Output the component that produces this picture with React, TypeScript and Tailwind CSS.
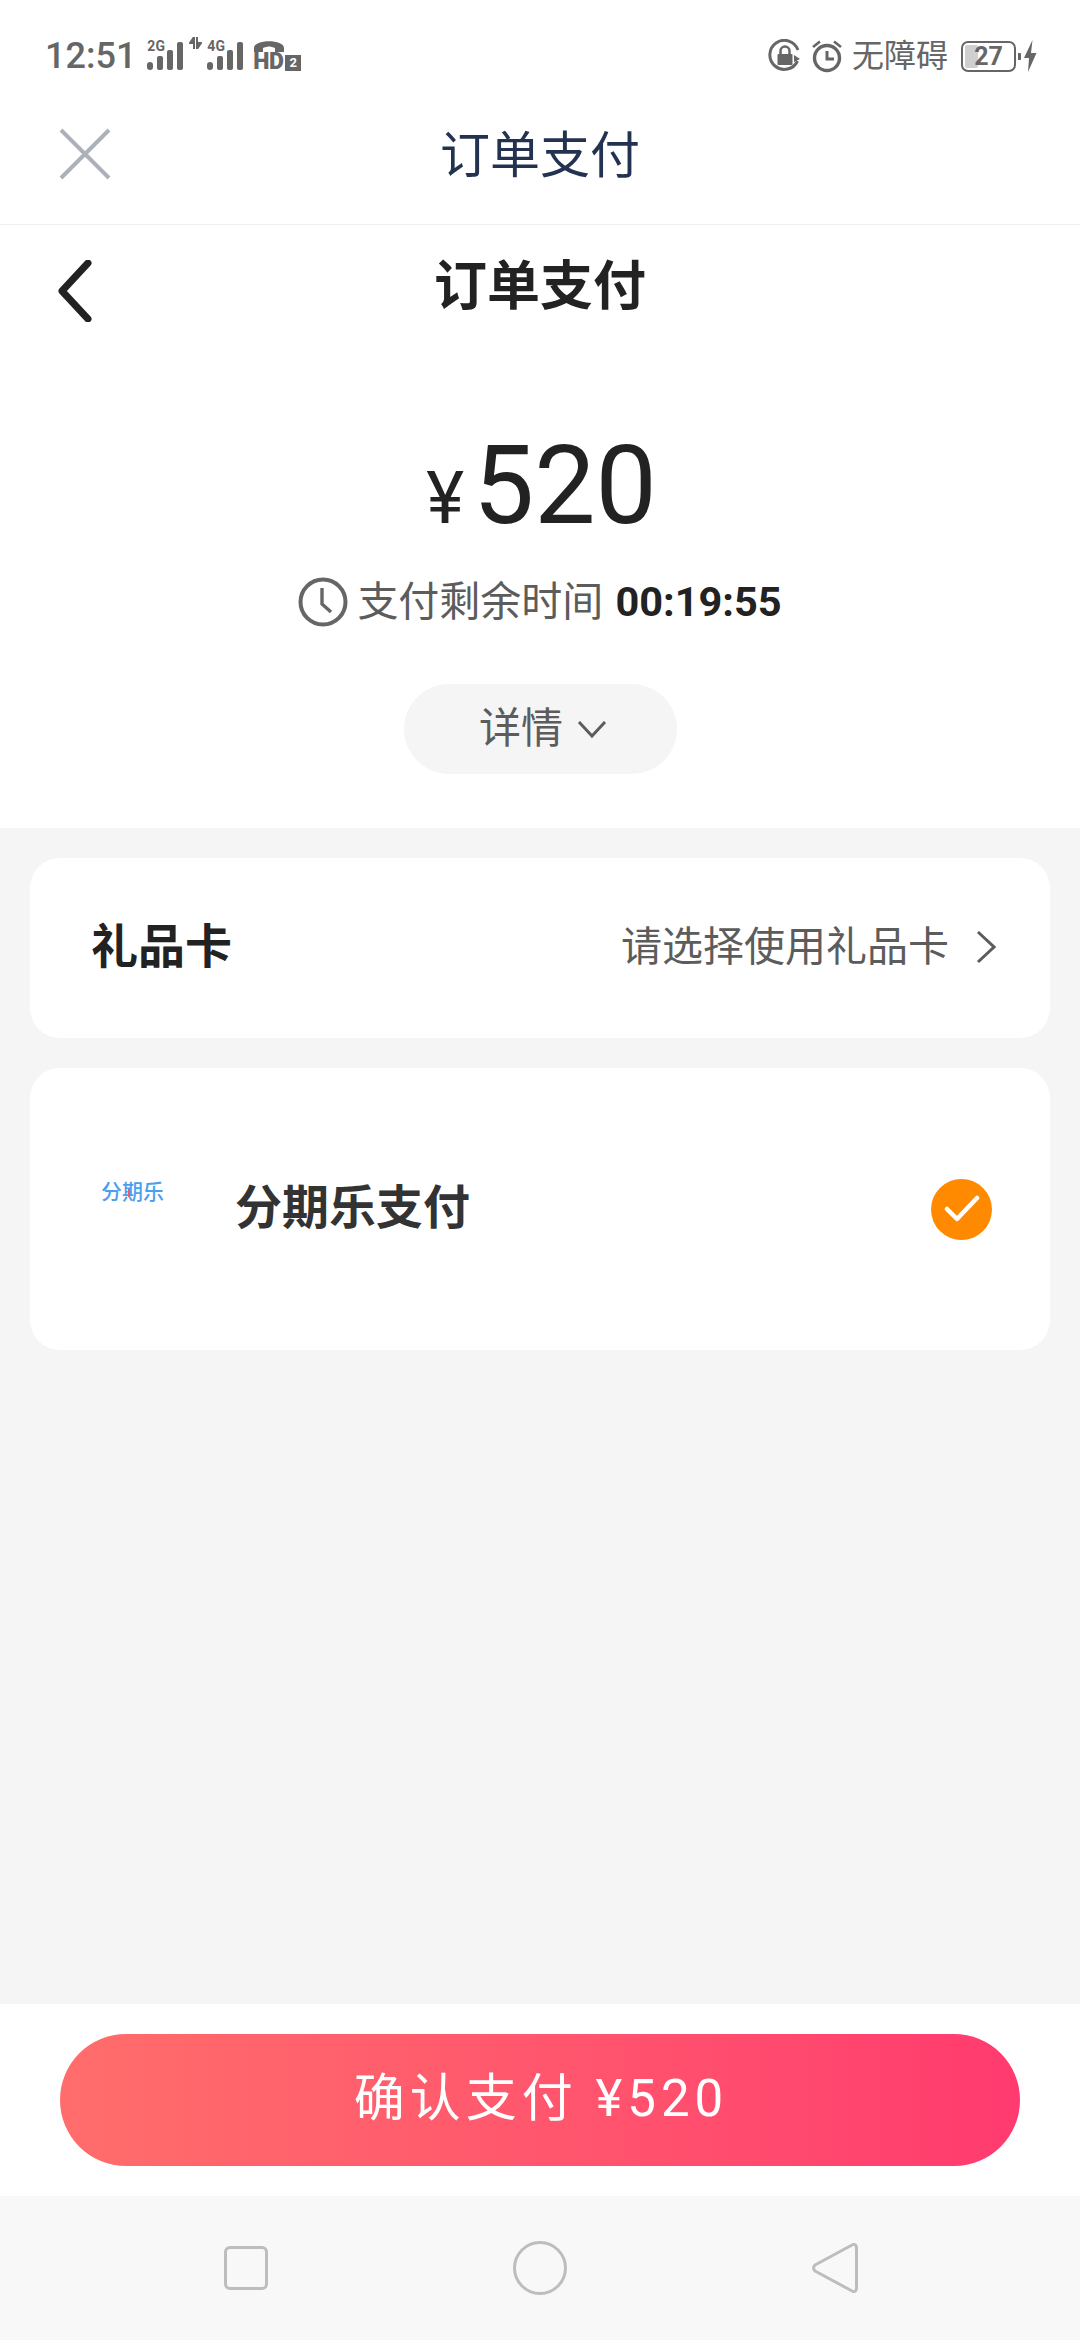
import React from "react";

function Bars() {
  return (
    <svg width="36" height="28" viewBox="0 0 36 28" className="block">
      <rect x="0" y="20" width="6" height="8" rx="3" fill="#666" />
      <rect x="10" y="14" width="6" height="14" rx="2" fill="#666" />
      <rect x="20" y="8" width="6" height="20" rx="2" fill="#666" />
      <rect x="30" y="0" width="6" height="28" rx="2" fill="#666" />
    </svg>
  );
}

function Signal({ label }: { label: string }) {
  return (
    <div className="relative w-[37px] h-[30px]">
      <span className="absolute left-0 top-[-1px] text-[14px] leading-[14px] font-bold text-[#666]">{label}</span>
      <div className="absolute left-0 bottom-0">
        <Bars />
      </div>
    </div>
  );
}

function StatusLeft() {
  return (
    <div className="flex items-center">
      <span className="text-[36px] leading-[36px] font-medium text-[#666]">12:51</span>
      <div className="ml-[11px] mt-[-3px]">
        <Signal label="2G" />
      </div>
      <svg width="13" height="12" viewBox="0 0 13 12" className="ml-[5px] mb-[26px]">
        <path d="M5 0 V12 M5 0 L1 6 H5 M8 12 V0 M8 12 L12 6 H8" stroke="#666" strokeWidth="2" fill="#666" />
      </svg>
      <div className="ml-[5px] mt-[-3px]">
        <Signal label="4G" />
      </div>
      <div className="ml-[9px] relative w-[50px] h-[32px] mt-[-2px]">
        <svg width="32" height="14" viewBox="0 0 32 14" className="absolute left-0 top-0">
          <path d="M1 13 V9 C1 0 31 0 31 9 V13 H22 V9 C16 7 16 7 10 9 V13 Z" fill="#666" />
        </svg>
        <span className="absolute left-0 top-[13px] text-[23px] leading-[20px] font-black text-[#666] tracking-[-0.5px]">HD</span>
        <span className="absolute left-[32px] top-[16px] w-[16px] h-[16px] bg-[#666] text-white text-[13px] leading-[16px] font-bold text-center">2</span>
      </div>
    </div>
  );
}

function LockIcon() {
  return (
    <svg width="34" height="34" viewBox="0 0 34 34" className="block">
      <path d="M29.5 22 A14.5 14.5 0 1 1 30 11" fill="none" stroke="#666" strokeWidth="3" />
      <path d="M26 16 L32 20 L26 23 Z" fill="#666" />
      <rect x="9.5" y="15" width="15" height="11" rx="1" fill="#666" />
      <path d="M12.5 15 V12 a4.5 4.5 0 0 1 9 0 V15" fill="none" stroke="#666" strokeWidth="2.5" />
    </svg>
  );
}

function AlarmIcon() {
  return (
    <svg width="30" height="34" viewBox="0 0 30 34" className="block">
      <circle cx="15" cy="19" r="12.5" fill="none" stroke="#666" strokeWidth="3.4" />
      <path d="M15 12 V20 H22" fill="none" stroke="#666" strokeWidth="3" />
      <path d="M1 8 L8 2.5 M29 8 L22 2.5" stroke="#666" strokeWidth="2.6" />
    </svg>
  );
}

function Battery() {
  return (
    <div className="flex items-center">
      <div className="relative w-[55px] h-[31px] rounded-[7px] border-[2.5px] border-[#666] flex items-center justify-center overflow-hidden">
        <div className="absolute left-[2px] top-[2px] bottom-[2px] w-[13px] bg-[#cfcfcf] rounded-[2px]" />
        <span className="relative text-[25px] leading-[25px] font-bold text-[#666]">27</span>
      </div>
      <div className="w-[3px] h-[7px] bg-[#666] ml-[2px] rounded-r-[1px]" />
      <svg width="14" height="32" viewBox="0 0 14 32" className="ml-[2px] block">
        <path d="M9.5 0 L1 18 H6 L5 32 L13.5 13 H8 Z" fill="#666" />
      </svg>
    </div>
  );
}

function StatusBar() {
  return (
    <div className="h-[88px] pl-[45px] pr-[43px] pt-[24px] flex items-center justify-between bg-white">
      <StatusLeft />
      <div className="flex items-center">
        <LockIcon />
        <div className="ml-[10px]">
          <AlarmIcon />
        </div>
        <span className="ml-[10px] text-[32px] leading-[36px] text-[#666]">无障碍</span>
        <div className="ml-[13px]">
          <Battery />
        </div>
      </div>
    </div>
  );
}

function Clock() {
  return (
    <svg width="50" height="50" viewBox="0 0 50 50" className="block">
      <circle cx="25" cy="25" r="22.5" fill="none" stroke="#666" strokeWidth="4" />
      <path d="M24 11 V27 L33 35" fill="none" stroke="#666" strokeWidth="3.4" />
    </svg>
  );
}

export default function App() {
  return (
    <div
      className="w-[1080px] h-[2340px] flex flex-col bg-[#f5f5f5] overflow-hidden"
      style={{ fontFamily: 'Roboto, "Noto Sans CJK SC", sans-serif' }}
    >
      <StatusBar />

      <div className="h-[137px] grid grid-cols-[1fr_auto_1fr] items-center bg-white border-b border-[#eeeff1]">
        <svg width="52" height="52" viewBox="0 0 52 52" className="ml-[59px] mt-[-4px] block">
          <path d="M2 2 L50 50 M50 2 L2 50" stroke="#adb1ba" strokeWidth="4" />
        </svg>
        <span className="text-[50px] leading-[60px] text-[#233250]">订单支付</span>
        <span />
      </div>

      <div className="h-[603px] bg-white flex flex-col items-center">
        <div className="w-full h-[122px] grid grid-cols-[1fr_auto_1fr] items-center">
          <svg width="36" height="62" viewBox="0 0 36 62" className="ml-[57px] mt-[10px] block">
            <path d="M31 3 L5 31 L31 59" fill="none" stroke="#222" strokeWidth="7" strokeLinecap="round" strokeLinejoin="round" />
          </svg>
          <span className="text-[53px] leading-[64px] font-bold text-[#222] mt-[2px]">订单支付</span>
          <span />
        </div>

        <div className="flex items-baseline mt-[94px] h-[90px] text-[#222] ml-[3px]">
          <span className="text-[72px] leading-[90px]">¥</span>
          <span className="ml-[9px] text-[109px] leading-[90px]">520</span>
        </div>

        <div className="flex items-center mt-[46px]">
          <Clock />
          <span className="ml-[9px] text-[41px] leading-[50px] text-[#5c5c5c]">支付剩余时间</span>
          <span className="ml-[12px] text-[41.5px] leading-[50px] font-bold text-[#222]">00:19:55</span>
        </div>

        <div className="mt-[57px] w-[273px] h-[90px] rounded-full bg-[#f5f5f5] flex items-center justify-center">
          <span className="text-[42px] leading-[50px] text-[#5c5c5c] ml-[6px]">详情</span>
          <svg width="30" height="18" viewBox="0 0 30 18" className="ml-[14px] block">
            <path d="M2 2 L15 16 L28 2" fill="none" stroke="#5c5c5c" strokeWidth="3" />
          </svg>
        </div>
      </div>

      <div className="flex-1 px-[30px] pt-[30px] flex flex-col gap-[30px]">
        <div className="h-[180px] rounded-[30px] bg-white pl-[61px] pr-[54px] flex items-center justify-between">
          <span className="text-[47px] leading-[60px] font-bold text-[#222] mt-[-2px]">礼品卡</span>
          <div className="flex items-center mt-[-3px]">
            <span className="text-[41px] leading-[50px] text-[#5c5c5c]">请选择使用礼品卡</span>
            <svg width="20" height="34" viewBox="0 0 20 34" className="ml-[27px] block">
              <path d="M2 2 L18 17 L2 32" fill="none" stroke="#5c5c5c" strokeWidth="3" />
            </svg>
          </div>
        </div>

        <div className="h-[282px] rounded-[30px] bg-white pl-[71px] pr-[58px] flex items-center">
          <div className="relative w-[64px] mt-[-34px]">
            <span className="block whitespace-nowrap text-[21px] leading-[28px] font-medium text-[#4b9ff0]">分期乐</span>
            <span className="absolute left-[27px] top-[11px] w-[2px] h-[8px] bg-[#ef5a6f]" />
          </div>
          <span className="ml-[70px] text-[47px] leading-[60px] font-bold text-[#333] mt-[-3px]">分期乐支付</span>
          <div className="ml-auto w-[61px] h-[61px] rounded-full bg-[#ff8a00] flex items-center justify-center">
            <svg width="36" height="28" viewBox="0 0 36 28" className="block">
              <path d="M3 14 L13 24 L33 3" fill="none" stroke="#fff" strokeWidth="4.5" strokeLinecap="round" strokeLinejoin="round" />
            </svg>
          </div>
        </div>
      </div>

      <div className="h-[192px] bg-white px-[60px] pt-[30px]">
        <div className="h-[132px] rounded-full bg-gradient-to-r from-[#ff6d6b] to-[#ff3a6f] flex items-center justify-center text-white">
          <span className="text-[51px] leading-[60px] tracking-[5px] ml-[2px] mb-[2px]">确认支付 ¥520</span>
        </div>
      </div>

      <div className="h-[144px] bg-[#f8f8f8] flex items-center pl-[224px]">
        <div className="w-[44px] h-[44px] rounded-[6px] border-[3px] border-[#bdbdbd]" />
        <div className="ml-[245px] w-[54px] h-[54px] rounded-full border-[3px] border-[#bdbdbd]" />
        <svg width="46" height="52" viewBox="0 0 46 52" className="ml-[245px] block">
          <path d="M41 2.5 Q44.5 2 44.5 6 V46 Q44.5 50 41 49.5 L3 29 Q0 26 3 23 Z" fill="none" stroke="#bdbdbd" strokeWidth="3" strokeLinejoin="round" />
        </svg>
      </div>
    </div>
  );
}
